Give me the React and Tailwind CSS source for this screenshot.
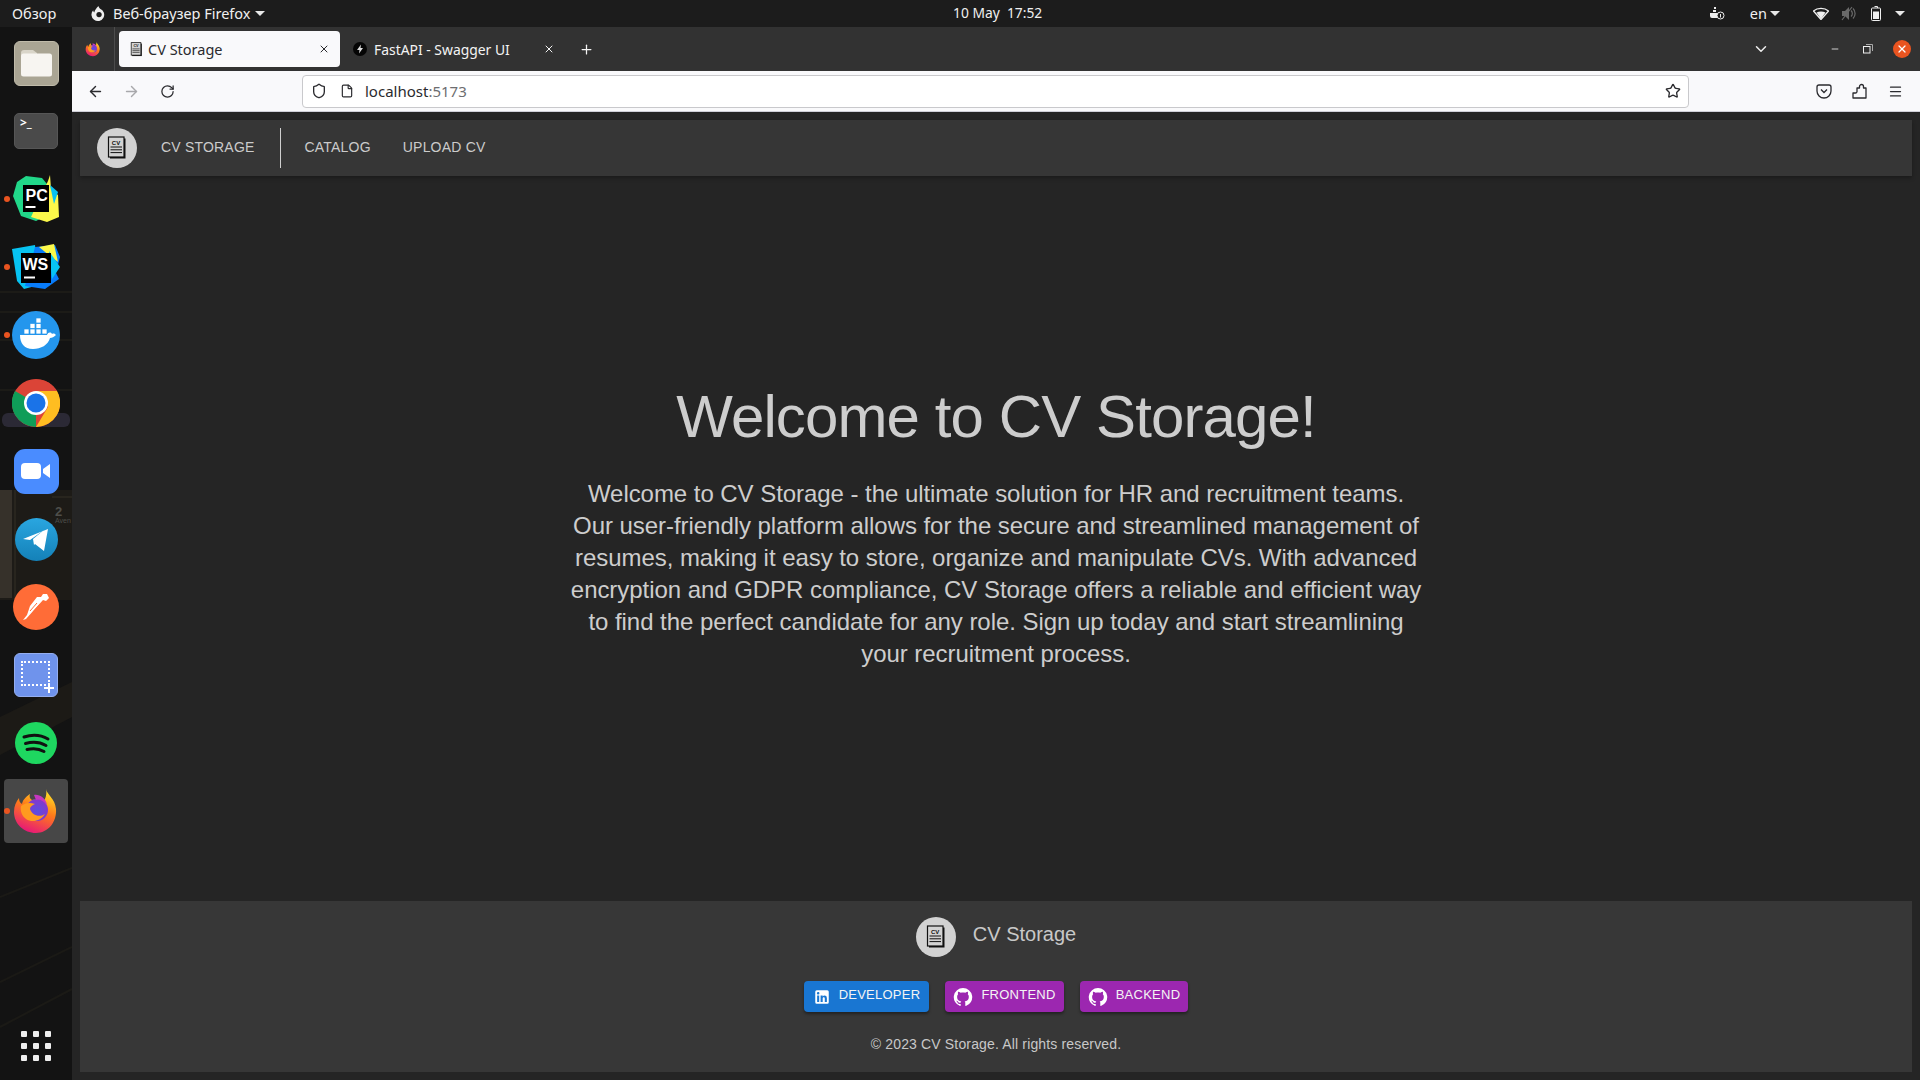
import React from "react";
import { ArrowLeft, ArrowRight, RotateCw, Shield, File, Star, Menu, ChevronDown, Plus, X, Minus } from "lucide-react";

const ui = "font-['Noto_Sans','Open_Sans',sans-serif]";
const web = "font-['Liberation_Sans',Arial,sans-serif]";

function Caret({ className = "" }) {
  return <span className={"inline-block w-0 h-0 border-l-[5px] border-r-[5px] border-t-[5px] border-l-transparent border-r-transparent border-t-[#e8e8e8] " + className} />;
}

function DocIcon({ size = 24 }) {
  return (
    <svg width={size} height={size} viewBox="0 0 24 24" fill="none">
      <rect x="5" y="2.5" width="15.5" height="20" fill="#111" />
      <rect x="3.5" y="1" width="15.5" height="20" fill="#d3d3d3" stroke="#111" strokeWidth="1.2" />
      <text x="11.2" y="8.6" textAnchor="middle" fontSize="6" fontWeight="700" fill="#111" className={web}>CV</text>
      <path d="M5.5 11h11.5M5.5 13.8h11.5M5.5 16.6h11.5" stroke="#111" strokeWidth="1" />
    </svg>
  );
}

function Logo() {
  return (
    <div className="w-10 h-10 rounded-full bg-[#d2d2d2] flex items-center justify-center shrink-0">
      <DocIcon />
    </div>
  );
}

function Firefox({ size = 48 }) {
  return (
    <svg width={size} height={size} viewBox="0 0 48 48">
      <defs>
        <linearGradient id="ffa" x1="0.7" y1="0" x2="0.3" y2="1">
          <stop offset="0" stopColor="#ffe226" />
          <stop offset="0.45" stopColor="#ff7a1a" />
          <stop offset="1" stopColor="#e5127d" />
        </linearGradient>
        <radialGradient id="ffb" cx="0.5" cy="0.55" r="0.6">
          <stop offset="0" stopColor="#5b4ee0" />
          <stop offset="1" stopColor="#8a35c9" />
        </radialGradient>
      </defs>
      <path d="M34 2c1 6 9 9 10 20 1 13-8 24-20 24S2 37 2 25c0-6 2-10 5-14 0 3 1 5 3 6 1-5 5-8 8-10-1 3 0 5 2 6 4-1 8 0 10 3 4-4 5-9 4-14z" fill="url(#ffa)" />
      <circle cx="25" cy="23" r="11" fill="url(#ffb)" />
      <path d="M9 19c4-3 9-4 14-2-3 1-5 3-5 5 2 6 9 9 15 5-4 7-13 9-19 5-4-3-6-8-5-13z" fill="#ff9a1f" />
      <path d="M22 8c5-1 12 3 13 10-3-4-7-6-11-5l-2-5z" fill="#c637c0" />
    </svg>
  );
}

function DockSlot({ children, dot = false, active = false }) {
  return (
    <div className="h-[68px] w-full flex items-center justify-center relative shrink-0">
      {active && <div className="absolute left-[4px] right-[4px] top-[2px] bottom-[2px] rounded-[4px] bg-[#474747]" />}
      {dot && <span className="absolute left-[4px] top-[31px] w-[6px] h-[6px] rounded-full bg-[#e95420]" />}
      <div className="relative flex items-center justify-center">{children}</div>
    </div>
  );
}

function Dock() {
  return (
    <aside className="w-[72px] shrink-0 bg-[#131313] relative flex flex-col pt-[2px] overflow-hidden">
      <svg className="absolute inset-0" width="72" height="1053" viewBox="0 0 72 1053">
        <path d="M0 265h72M0 285h72M0 313h72M0 363h72" stroke="#25231d" strokeWidth="1.500" opacity="0.8" />
        <rect x="2" y="386" width="68" height="14" rx="6" fill="#3c384c" opacity="0.6" />
        <rect x="0" y="463" width="72" height="110" fill="#1d1b17" />
        <rect x="0" y="463" width="12" height="108" fill="#36312a" />
        <path d="M15 463v108M52 470H72" stroke="#2d2a22" strokeWidth="1.500" />
        <text x="55" y="489" fontSize="13" fontWeight="700" fill="#4e4e4a" className={web}>2</text>
        <text x="55" y="496" fontSize="7" fill="#4e4e4a" className={web}>Aven</text>
        <path d="M0 690L72 655V690L0 728Z" fill="#1c1a16" />
        <path d="M0 870L72 841M0 955L72 920M0 1000L72 962" stroke="#1b1a16" strokeWidth="2" />
      </svg>

      <DockSlot>
        <div className="w-[45px] h-[45px] rounded-[6px] bg-[#aaa594] border border-[#c0bbaa] flex items-center justify-center">
          <svg width="32" height="28" viewBox="0 0 32 28">
            <path d="M1 4a3 3 0 0 1 3-3h9l4 3v4H1z" fill="#d9d5c9" />
            <rect x="1" y="4.5" width="31" height="23" rx="2.5" fill="#f7f5f1" />
          </svg>
        </div>
      </DockSlot>
      <DockSlot>
        <div className="w-[44px] h-[36px] rounded-[5px] bg-[#4a4a4a] border border-[#565656] relative">
          <span className={"absolute left-[5px] top-[1px] text-[12px] leading-[16px] font-bold text-white " + ui}>&gt;_</span>
        </div>
      </DockSlot>
      <DockSlot dot>
        <svg width="48" height="48" viewBox="0 0 48 48">
          <path d="M14 1L30 3l10 12-2 24-14 7L9 41 1 21 5 7z" fill="#21d789" />
          <path d="M38 0l1 14 7 6 1 22-12 5-16-5 17-36z" fill="#fcf84a" />
          <path d="M38 10l8 7-4 12z" fill="#07c3f2" />
          <rect x="11" y="10" width="26" height="27" fill="#000" />
          <text x="13.500" y="26" fontSize="16" fontWeight="700" fill="#fff" className={web}>PC</text>
          <rect x="13.500" y="31" width="10" height="2" fill="#fff" />
        </svg>
      </DockSlot>
      <DockSlot dot>
        <svg width="50" height="48" viewBox="0 0 50 48">
          <path d="M1 6L24 2l4 40-15 4-7-8z" fill="#07c3f2" />
          <path d="M24 4L44 2l5 12-4 16 3 6-14 10-20-3z" fill="#087cfa" />
          <path d="M28 4l15-3 4 18-8-6z" fill="#fcf84a" />
          <path d="M38 8l11 16-8 12z" fill="#07c3f2" />
          <rect x="10" y="10" width="30" height="30" fill="#000" />
          <text x="11.500" y="27" fontSize="16" fontWeight="700" fill="#fff" className={web}>WS</text>
          <rect x="13" y="33.500" width="11" height="2" fill="#fff" />
        </svg>
      </DockSlot>
      <DockSlot dot>
        <svg width="48" height="48" viewBox="0 0 48 48">
          <circle cx="24" cy="24" r="24" fill="#2496ed" />
          <path d="M8 24h27c1-3 4-3 5-1 2-1 3 0 4 1-2 2-4 3-6 3-2 7-9 11-17 11-9 0-13-6-13-14z" fill="#fff" />
          <path d="M12 18h5v5h-5zM18 18h5v5h-5zM24 18h5v5h-5zM18 12.500h5v5h-5zM24 12.500h5v5h-5zM24 7h5v5h-5zM30 18h5v5h-5z" fill="#fff" stroke="#2496ed" strokeWidth="0.7" />
        </svg>
      </DockSlot>
      <DockSlot>
        <svg width="48" height="48" viewBox="0 0 48 48">
          <circle cx="24" cy="24" r="24" fill="#db4437" />
          <path d="M24 24L3 12a24 24 0 0 0 21 36z" fill="#0f9d58" />
          <path d="M24 12h21a24 24 0 0 1-21 36l12-20z" fill="#ffbd21" />
          <path d="M24 12H4a24 24 0 0 1 41 0z" fill="#db4437" />
          <circle cx="24" cy="24" r="12" fill="#fff" />
          <circle cx="24" cy="24" r="9.500" fill="#1a73e8" />
        </svg>
      </DockSlot>
      <DockSlot>
        <div className="w-[45px] h-[45px] rounded-[11px] bg-[#4a8cff] flex items-center justify-center">
          <svg width="30" height="18" viewBox="0 0 30 18">
            <rect x="0" y="1" width="20" height="16" rx="4" fill="#fff" />
            <path d="M22 7l7-5v14l-7-5z" fill="#fff" />
          </svg>
        </div>
      </DockSlot>
      <DockSlot>
        <svg width="43" height="43" viewBox="0 0 43 43">
          <defs>
            <linearGradient id="tg" x1="0" y1="0" x2="0" y2="1">
              <stop offset="0" stopColor="#2aa6e0" />
              <stop offset="1" stopColor="#1481b8" />
            </linearGradient>
          </defs>
          <circle cx="21.500" cy="21.500" r="21.500" fill="url(#tg)" />
          <path d="M8 21L33 11l-4 22-9-7-1 1-1-6 11-9-14 10z" fill="#fff" />
        </svg>
      </DockSlot>
      <DockSlot>
        <svg width="46" height="46" viewBox="0 0 46 46">
          <circle cx="23" cy="23" r="23" fill="#ff6c37" />
          <path d="M10 36l3-1 8-9 9-10 3 1 3-3-2-4-4 0-2 3-4 0-7 9-3 9z" fill="#fff" />
          <path d="M17 27l7-8M20 28l7-8" stroke="#ff6c37" strokeWidth="1" />
        </svg>
      </DockSlot>
      <DockSlot>
        <div className="w-[44px] h-[44px] rounded-[6px] bg-[#6f93ec] border border-[#94aef0] relative">
          <div className="absolute left-[6px] top-[7px] w-[29px] h-[25px] border-2 border-dotted border-white" />
          <svg className="absolute right-[2px] bottom-[2px]" width="12" height="12" viewBox="0 0 12 12"><path d="M6 1v10M1 6h10" stroke="#fff" strokeWidth="2" /></svg>
        </div>
      </DockSlot>
      <DockSlot>
        <svg width="42" height="42" viewBox="0 0 42 42">
          <circle cx="21" cy="21" r="21" fill="#1ed760" />
          <path d="M9 15c8-2.500 17-2 24 2M10.500 21.500c7-2 14.500-1.500 20.500 2M12 27.500c6-1.500 12-1 17 2" fill="none" stroke="#111" strokeWidth="3" strokeLinecap="round" />
        </svg>
      </DockSlot>
      <DockSlot dot active>
        <Firefox />
      </DockSlot>
      <div className="mt-auto mb-[19px] w-full flex justify-center">
        <div className="grid grid-cols-3 gap-x-[6px] gap-y-[6px]">
          {[0, 1, 2, 3, 4, 5, 6, 7, 8].map((i) => (
            <span key={i} className="w-[6px] h-[6px] rounded-[1px] bg-[#efefef]" />
          ))}
        </div>
      </div>
    </aside>
  );
}

function TopBar() {
  return (
    <header className={"h-[27px] shrink-0 bg-[#1c1c1c] flex items-center text-[#f0f0f0] text-[14.500px] " + ui}>
      <span className="ml-[12px] w-[78px]">Обзор</span>
      <svg width="17" height="17" viewBox="0 0 16 16" className="mr-[6px]">
        <path d="M8 1c0 1 1 2 1.500 2.500A6 6 0 1 1 3 5c0 1 .5 1.500 1 2 .5-2 2-4 4-6z" fill="#eee" />
        <circle cx="8.500" cy="9" r="2.500" fill="#1c1c1c" />
      </svg>
      <span>Веб-браузер Firefox</span>
      <Caret className="ml-[5px]" />
      <span className="flex-1 text-center text-[13.800px] pl-[21px]">10 May&nbsp;&nbsp;17:52</span>
      <svg width="16" height="15" viewBox="0 0 16 15" className="mr-[25px]">
        <path d="M1 7h8v5H3a2 2 0 0 1-2-2zM4 4h3v2H4zM5 1h2v2H5z" fill="#eee" />
        <circle cx="11.500" cy="9.500" r="3.500" fill="#1c1c1c" stroke="#eee" />
        <path d="M11.500 8v3.500" stroke="#eee" />
      </svg>
      <span>en</span>
      <Caret className="ml-[3px] mr-[33px]" />
      <svg width="16" height="13" viewBox="0 0 16 13" className="mr-[12px]">
        <path d="M8 12.500L.5 4C4.500.5 11.500.5 15.500 4z" fill="none" stroke="#f0f0f0" strokeWidth="1.300" />
        <path d="M8 12L3.500 5.500c2.500-1.500 6.500-1.500 9 0z" fill="#f0f0f0" />
      </svg>
      <svg width="15" height="15" viewBox="0 0 15 15" className="mr-[15px]">
        <path d="M1 5h3l4-4v13l-4-4H1z" fill="#6a6a6a" />
        <path d="M10 4.500a4 4 0 0 1 0 6M12 2.500a7 7 0 0 1 0 10M1 14L11 1" stroke="#6a6a6a" strokeWidth="1.200" fill="none" />
      </svg>
      <svg width="10" height="15" viewBox="0 0 10 15" className="mr-[14px]">
        <path d="M3.500 .5h3v1.500" stroke="#f0f0f0" fill="none" />
        <rect x=".5" y="2" width="9" height="12.500" rx="1" fill="none" stroke="#f0f0f0" />
        <rect x="2" y="5.500" width="6" height="7.500" fill="#f0f0f0" />
      </svg>
      <Caret className="mr-[15px]" />
    </header>
  );
}

function TabBar() {
  return (
    <div className={"h-[44px] shrink-0 bg-[#323232] flex items-center " + ui}>
      <div className="w-[43px] h-full flex items-center justify-center border-r border-[#4c4c4c] shrink-0">
        <Firefox size={16} />
      </div>
      <div className="ml-[4px] w-[221px] h-[36px] rounded-[4px] bg-[#f9f9fb] text-[#2a2a2e] flex items-center px-[10px] shrink-0">
        <DocIcon size={15} />
        <span className="ml-[4px] flex-1 text-[14.500px] translate-y-[1px]">CV Storage</span>
        <X size={12} />
      </div>
      <div className="w-[220px] h-[36px] text-[#f4f4f4] flex items-center pl-[13px] pr-[5px] shrink-0">
        <svg width="14" height="14" viewBox="0 0 14 14">
          <circle cx="7" cy="7" r="7" fill="#050505" />
          <path d="M8 2.500L4 8h2.500L6 11.500 10 6H7.500z" fill="#ddd" />
        </svg>
        <span className="ml-[7px] flex-1 text-[13.900px] translate-y-[1px]">FastAPI - Swagger UI</span>
        <X size={12} />
      </div>
      <Plus size={15} className="text-[#f4f4f4] ml-[19px]" />
      <div className="flex-1" />
      <ChevronDown size={18} className="text-[#eee] mr-[60px]" />
      <Minus size={10} className="text-[#eee] mr-[23px]" />
      <svg width="10" height="10" viewBox="0 0 10 10" className="mr-[20px]">
        <rect x="0.500" y="2.500" width="6.500" height="6.500" fill="none" stroke="#eee" />
        <path d="M3 .5h6.500V7" fill="none" stroke="#aaa" />
      </svg>
      <div className="w-[18px] h-[18px] rounded-full bg-[#e95420] flex items-center justify-center mr-[9px]">
        <X size={12} strokeWidth={2.500} className="text-white" />
      </div>
    </div>
  );
}

function Toolbar() {
  return (
    <div className={"h-[41px] shrink-0 bg-[#f9f9fb] border-b border-[#cfcfd8] flex items-center text-[#2a2a2e] " + ui}>
      <ArrowLeft size={17} className="ml-[15px]" />
      <ArrowRight size={17} className="ml-[19px] text-[#a8a8ab]" />
      <RotateCw size={15} className="ml-[20px]" />
      <div className="ml-[127px] flex-1 h-[33px] bg-white border border-[#c9c9cc] rounded-[4px] flex items-center pl-[8px] pr-[6px]">
        <Shield size={16} />
        <File size={14} className="ml-[13px]" />
        <span className="ml-[11px] text-[15px]">localhost<span className="text-[#6d6d70]">:5173</span></span>
        <div className="flex-1" />
        <Star size={16} className="mr-[1px]" />
      </div>
      <svg width="16" height="15" viewBox="0 0 16 15" className="ml-[127px]" fill="none" stroke="#2a2a2e" strokeWidth="1.300">
        <path d="M1 3a2 2 0 0 1 2-2h10a2 2 0 0 1 2 2v4a7 7 0 0 1-14 0z" />
        <path d="M5 5.500l3 3 3-3" />
      </svg>
      <svg width="15" height="16" viewBox="0 0 15 16" className="ml-[20px]" fill="none" stroke="#2a2a2e" strokeWidth="1.300">
        <path d="M1 15V10h2.500a1.500 1.500 0 0 0 1.500-1.500V5h2.500V3.500a2 2 0 0 1 4 0V5H14v10z" strokeLinejoin="round" />
      </svg>
      <Menu size={15} className="ml-[21px] mr-[17px]" />
    </div>
  );
}

function NavBar() {
  return (
    <nav className="h-[56px] shrink-0 bg-[#363636] shadow-[0_2px_4px_rgba(0,0,0,0.3)] flex items-center pl-[17px] text-[14px] text-[#cbcbcb] tracking-[0.2px]">
      <Logo />
      <span className="ml-[24px] -translate-y-[1px]">CV STORAGE</span>
      <span className="ml-[25px] w-px h-10 bg-[#cfcfcf]" />
      <span className="ml-[24px] -translate-y-[1px]">CATALOG</span>
      <span className="ml-[32px] -translate-y-[1px]">UPLOAD CV</span>
    </nav>
  );
}

function Main() {
  return (
    <main className="flex-1 flex flex-col items-center justify-center text-center text-[#cdcdcd] pb-[26px]">
      <h1 className="text-[60px] leading-[72px] tracking-[-0.9px]">Welcome to CV Storage!</h1>
      <p className="mt-[25px] w-[860px] text-[24px] leading-[32px] tracking-[-0.05px]">
        Welcome to CV Storage - the ultimate solution for HR and recruitment teams. Our user-friendly platform allows for the secure and streamlined management of resumes, making it easy to store, organize and manipulate CVs. With advanced encryption and GDPR compliance, CV Storage offers a reliable and efficient way to find the perfect candidate for any role. Sign up today and start streamlining your recruitment process.
      </p>
    </main>
  );
}

function FooterBtn({ color, icon, children, w }) {
  return (
    <span className={"h-[31px] rounded-[4px] flex items-center justify-center gap-[8px] text-[13px] tracking-[0.25px] text-[#f4f4f4] shadow-[0_2px_3px_rgba(0,0,0,0.4)] " + color + " " + w}>
      {icon}
      <span className="-translate-y-[2px]">{children}</span>
    </span>
  );
}

const Github = () => (
  <svg width="20" height="20" viewBox="0 0 24 24" fill="#fff"><path d="M12 1.270a11 11 0 00-3.480 21.460c.550.090.730-.280.730-.550v-1.840c-3.030.640-3.670-1.460-3.670-1.460-.550-1.290-1.280-1.650-1.280-1.650-.920-.650.100-.650.100-.650 1.100 0 1.730 1.100 1.730 1.100.920 1.650 2.570 1.200 3.210.920a2 2 0 01.640-1.470c-2.470-.270-5.040-1.190-5.040-5.500 0-1.100.460-2.100 1.200-2.840a3.760 3.760 0 010-2.930s.910-.280 3.110 1.100c1.800-.490 3.700-.490 5.500 0 2.100-1.380 3.020-1.100 3.020-1.100a3.760 3.760 0 010 2.930c.830.740 1.200 1.740 1.200 2.940 0 4.210-2.570 5.130-5.040 5.400.450.370.820.920.820 2.020v3.030c0 .270.100.640.730.550A11 11 0 0012 1.270" /></svg>
);
const Linkedin = () => (
  <svg width="18" height="18" viewBox="0 0 24 24" fill="#fff"><path d="M19 3a2 2 0 0 1 2 2v14a2 2 0 0 1-2 2H5a2 2 0 0 1-2-2V5a2 2 0 0 1 2-2h14m-.5 15.500v-5.300a3.260 3.260 0 0 0-3.260-3.260c-.850 0-1.840.520-2.320 1.300v-1.110h-2.790v8.370h2.790v-4.930c0-.770.620-1.400 1.390-1.400a1.400 1.400 0 0 1 1.400 1.400v4.930h2.790M6.880 8.560a1.680 1.680 0 0 0 1.680-1.680c0-.930-.750-1.690-1.680-1.690a1.690 1.690 0 0 0-1.690 1.690c0 .930.760 1.680 1.690 1.680m1.390 9.940v-8.370H5.500v8.370h2.770z" /></svg>
);

function Footer() {
  return (
    <footer className="h-[171px] shrink-0 bg-[#373737] flex flex-col items-center pt-[16px] text-[#c8c8c8]">
      <div className="h-10 flex items-center gap-[17px]">
        <Logo />
        <span className="text-[20px] -translate-y-[3px]">CV Storage</span>
      </div>
      <div className="mt-[24px] flex gap-4">
        <FooterBtn color="bg-[#1976d2]" w="w-[125px]" icon={<Linkedin />}>DEVELOPER</FooterBtn>
        <FooterBtn color="bg-[#9c27b0]" w="w-[119px]" icon={<Github />}>FRONTEND</FooterBtn>
        <FooterBtn color="bg-[#9c27b0]" w="w-[108px]" icon={<Github />}>BACKEND</FooterBtn>
      </div>
      <p className="mt-[22px] text-[14px] leading-[20px] tracking-[0.15px]">© 2023 CV Storage. All rights reserved.</p>
    </footer>
  );
}

export default function App() {
  return (
    <div className="w-[1920px] h-[1080px] flex flex-col overflow-hidden bg-[#242424]">
      <TopBar />
      <div className="flex-1 flex min-h-0">
        <Dock />
        <div className="flex-1 flex flex-col min-w-0">
          <TabBar />
          <Toolbar />
          <div className={"flex-1 flex flex-col bg-[#252525] p-2 min-h-0 " + web}>
            <NavBar />
            <Main />
            <Footer />
          </div>
        </div>
      </div>
    </div>
  );
}
